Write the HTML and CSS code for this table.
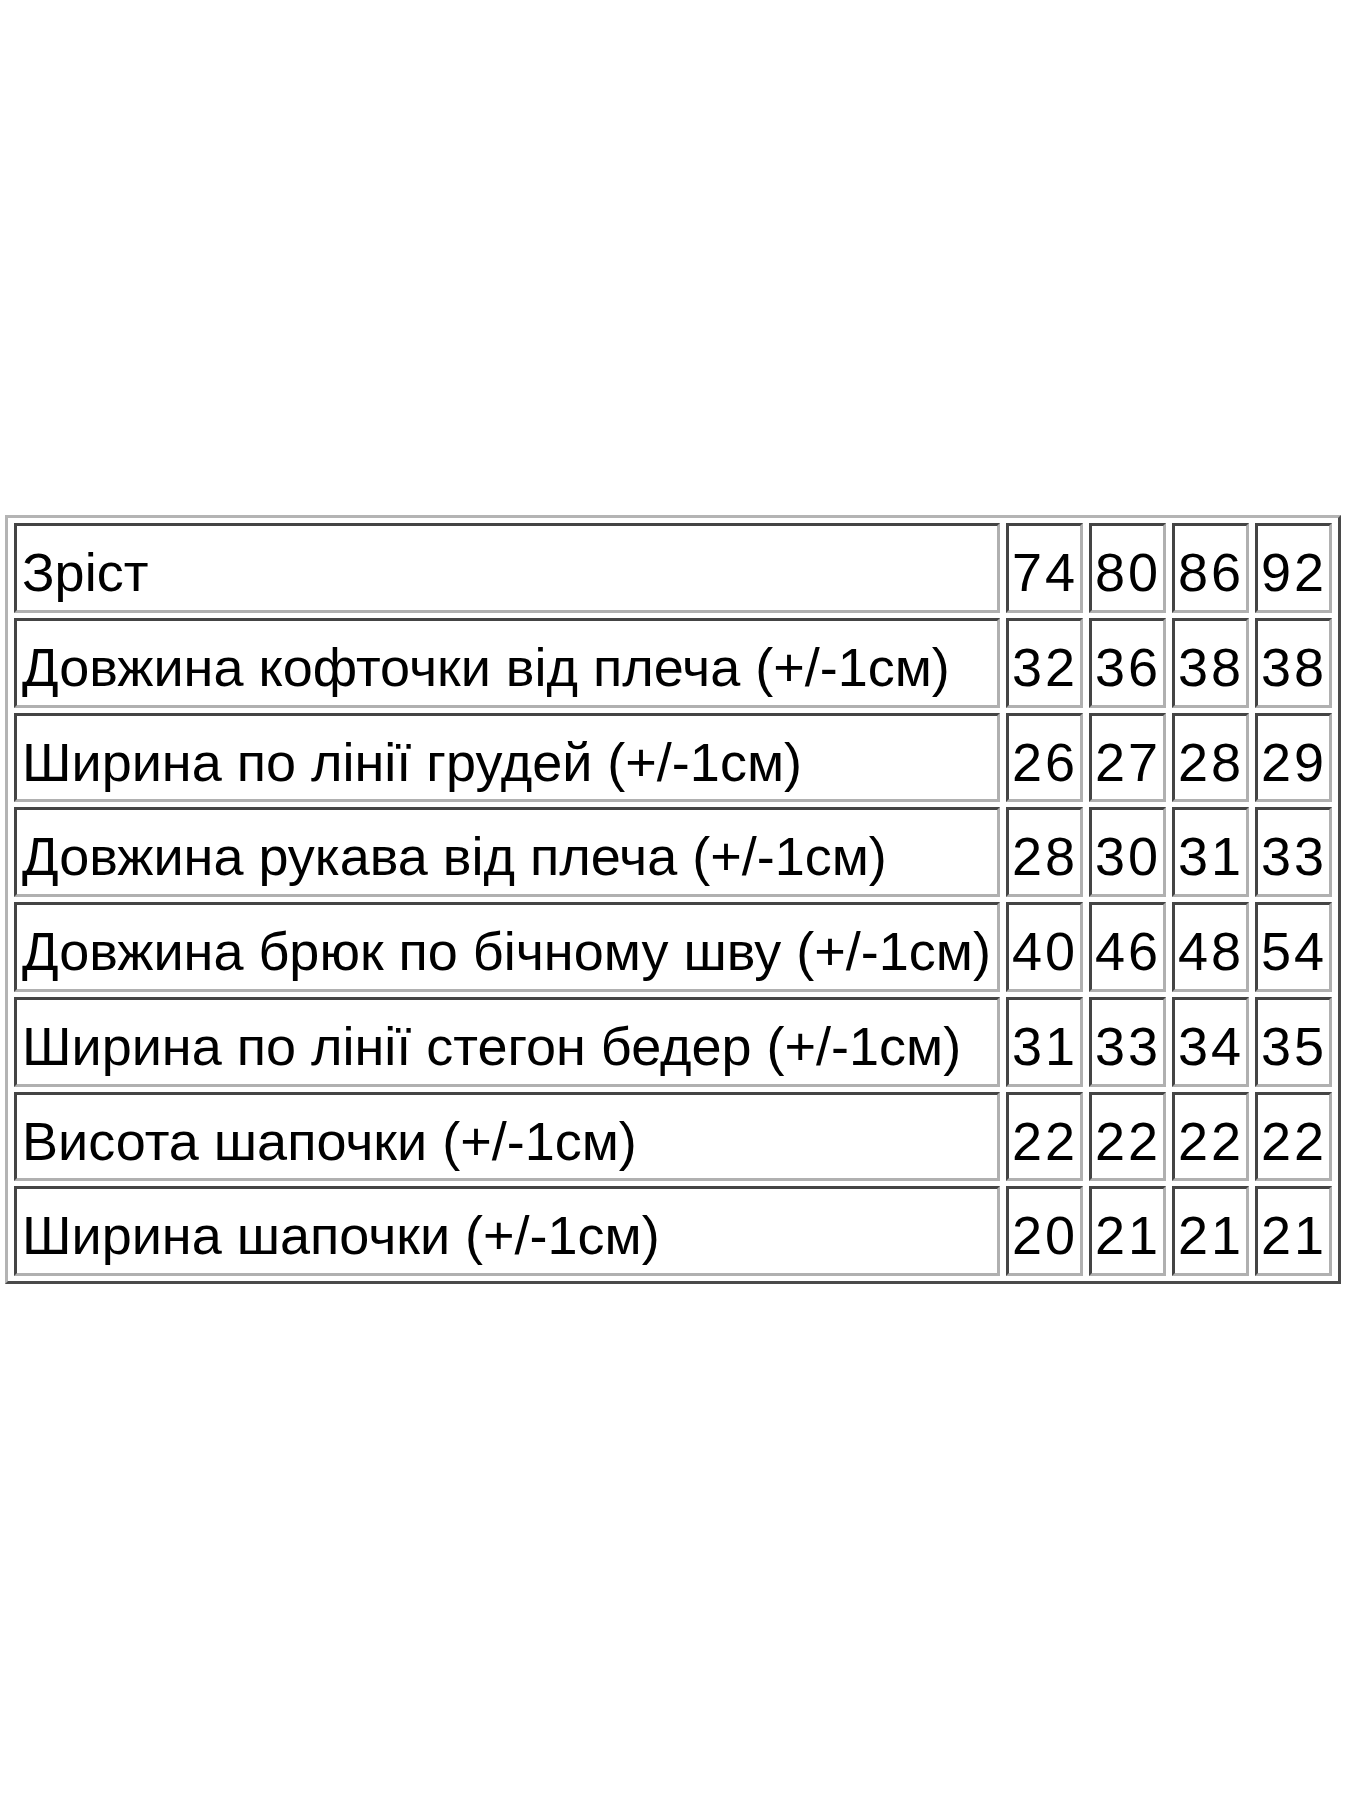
FILE: index.html
```html
<!DOCTYPE html>
<html lang="uk">
<head>
<meta charset="utf-8">
<title>Таблиця розмірів</title>
<link rel="stylesheet" href="styles.css">
</head>
<body>
<div class="page">
  <table class="sizes">
    <tr><td class="label">Зріст</td><td>74</td><td>80</td><td>86</td><td>92</td></tr>
    <tr><td class="label">Довжина кофточки від плеча (+/-1см)</td><td>32</td><td>36</td><td>38</td><td>38</td></tr>
    <tr><td class="label">Ширина по лінії грудей (+/-1см)</td><td>26</td><td>27</td><td>28</td><td>29</td></tr>
    <tr><td class="label">Довжина рукава від плеча (+/-1см)</td><td>28</td><td>30</td><td>31</td><td>33</td></tr>
    <tr><td class="label">Довжина брюк по бічному шву (+/-1см)</td><td>40</td><td>46</td><td>48</td><td>54</td></tr>
    <tr><td class="label">Ширина по лінії стегон бедер (+/-1см)</td><td>31</td><td>33</td><td>34</td><td>35</td></tr>
    <tr><td class="label">Висота шапочки (+/-1см)</td><td>22</td><td>22</td><td>22</td><td>22</td></tr>
    <tr><td class="label">Ширина шапочки (+/-1см)</td><td>20</td><td>21</td><td>21</td><td>21</td></tr>
  </table>
</div>
</body>
</html>
```
FILE: styles.css
```css
html, body {
  margin: 0;
  padding: 0;
  background: #ffffff;
}
.page {
  width: 1350px;
  height: 1800px;
  box-sizing: border-box;
  padding: 515px 0 0 5px;
}
.sizes {
  border-collapse: separate;
  border-spacing: 6px 5px;
  border-style: solid;
  border-width: 3px;
  border-color: #b4b4b4 #4a4a4a #4a4a4a #b4b4b4;
  font-family: "Liberation Sans", Arial, sans-serif;
  color: #000;
}
.sizes td {
  border-style: solid;
  border-width: 3px;
  border-color: #444444 #b0b0b0 #b0b0b0 #444444;
  padding: 9px 3px 0 3px;
  line-height: 74.75px;
  width: 65px;
  min-width: 65px;
  max-width: 65px;
  font-size: 54px;
  letter-spacing: 3px;
  white-space: nowrap;
  overflow: hidden;
  text-align: left;
  vertical-align: middle;
}
.sizes td.label {
  width: 971px;
  min-width: 971px;
  max-width: 971px;
  padding: 9px 4px 0 5px;
  letter-spacing: 0;
}
```
